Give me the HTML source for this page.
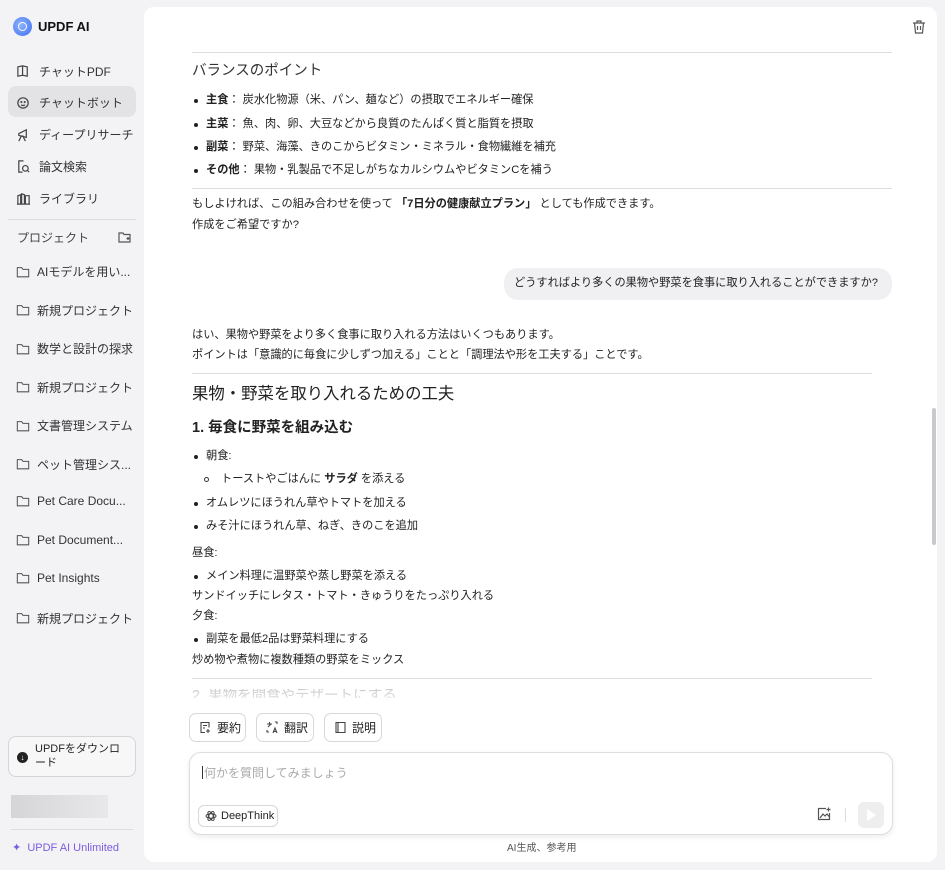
<!DOCTYPE html>
<html><head><meta charset="utf-8"><style>
*{margin:0;padding:0;box-sizing:border-box}
body{width:945px;height:870px;background:#f3f3f5;font-family:"Liberation Sans","Noto Sans CJK JP",sans-serif;color:#222;position:relative;overflow:hidden;font-size:11.2px}
.a{position:absolute;white-space:nowrap;line-height:1}
.nav{position:absolute;left:16px;font-size:12px;color:#333;display:flex;align-items:center;gap:8px;white-space:nowrap}
.nav svg{width:15px;height:15px}
.main{position:absolute;left:144px;top:7px;width:793px;height:855px;background:#fff;border-radius:10px}
.hr{position:absolute;height:1px;background:#ddd}
.dot{position:absolute;width:4px;height:4px;border-radius:50%;background:#222}
.btn{position:absolute;top:713px;height:29px;border:1px solid #d8d8d8;border-radius:7px;background:#fff;font-size:12px;display:flex;align-items:center;gap:5px;padding-left:9px;color:#222}
</style></head><body>
<div class="a" style="left:13px;top:17px;width:19px;height:19px;border-radius:50%;background:radial-gradient(circle at 40% 40%,#8fb4ff,#3b6cf0)"></div>
<div class="a" style="left:18px;top:22px;width:9px;height:9px;border-radius:50%;border:1.5px solid #fff"></div>
<div class="a" style="left:38px;top:20px;font-weight:bold;font-size:13px;color:#111">UPDF AI</div>
<div class="a" style="left:8px;top:86px;width:128px;height:31px;border-radius:8px;background:#e3e3e6"></div>
<div class="nav" style="top:63px"><svg viewBox="0 0 16 16" fill="none" stroke="#444" stroke-width="1.3"><path d="M2 3v10l5-1 5 1V3L7 2 2 3zM7 2v10"/></svg>チャットPDF</div>
<div class="nav" style="top:94px"><svg viewBox="0 0 16 16" fill="none" stroke="#444" stroke-width="1.3"><circle cx="7.5" cy="8.5" r="5.5"/><path d="M5.5 10.5q2 1.5 4 0"/><circle cx="5.7" cy="7.5" r=".5"/><circle cx="9.3" cy="7.5" r=".5"/></svg>チャットボット</div>
<div class="nav" style="top:126px"><svg viewBox="0 0 16 16" fill="none" stroke="#444" stroke-width="1.3"><path d="M3 7l8-4v8L3 9zM6 9l-3 6M7 9l3 6"/></svg>ディープリサーチ</div>
<div class="nav" style="top:158px"><svg viewBox="0 0 16 16" fill="none" stroke="#444" stroke-width="1.3"><path d="M8 2H3v12h4"/><circle cx="10" cy="10" r="3"/><path d="M12 12l2 2"/></svg>論文検索</div>
<div class="nav" style="top:190px"><svg viewBox="0 0 16 16" fill="none" stroke="#444" stroke-width="1.3"><path d="M2 14V5l3-1v10M6 14V3l3 1v10M10 14V5h4v9M1 14h14"/></svg>ライブラリ</div>
<div class="hr" style="left:8px;top:219px;width:128px;background:#ddd"></div>
<div class="a" style="left:17px;top:232px;font-size:12px;color:#444">プロジェクト</div>
<svg class="a" style="left:118px;top:231px" width="14" height="13" viewBox="0 0 14 13" fill="none" stroke="#555" stroke-width="1.2"><path d="M1 2h4l1 1.5h6V11H1z"/><path d="M10 6v3M8.5 7.5h3"/></svg>
<div id="projs"></div>
<div class="a" style="left:8px;top:736px;width:128px;height:41px;border:1px solid #d5d5d8;border-radius:8px;background:#f7f7f8"></div>
<div class="a" style="left:17px;top:752px;width:11px;height:11px;border-radius:50%;background:#222;color:#fff;font-size:8px;text-align:center;line-height:11px">↓</div>
<div class="a" style="left:35px;top:742px;font-size:11px;line-height:14px;white-space:normal;width:90px;color:#222">UPDFをダウンロ<br>ード</div>
<div class="a" style="left:11px;top:795px;width:97px;height:23px;background:linear-gradient(90deg,#d5d5d8,#e8e8ea)"></div>
<div class="hr" style="left:11px;top:829px;width:122px"></div>
<div class="a" style="left:12px;top:843px;font-size:11px;color:#7b5ce0">✦&nbsp; UPDF AI Unlimited</div>
<div class="main"></div>
<svg class="a" style="left:912px;top:19px" width="14" height="15" viewBox="0 0 14 15" fill="none" stroke="#555" stroke-width="1.2"><path d="M1 4h12M5 4V2h4v2M2.5 4l1 10h7l1-10M5.5 7v4M8.5 7v4"/></svg>
<div class="a" style="left:932px;top:408px;width:4px;height:137px;border-radius:2px;background:#c9c9cc"></div>
<div class="hr" style="left:192px;top:52px;width:700px"></div>
<div class="a" style="left:192px;top:64px;font-size:14.5px;color:#333">バランスのポイント</div>
<div class="dot" style="left:194px;top:99px"></div><div class="a" style="left:206px;top:95px"><b>主食</b>： 炭水化物源（米、パン、麺など）の摂取でエネルギー確保</div>
<div class="dot" style="left:194px;top:123px"></div><div class="a" style="left:206px;top:119px"><b>主菜</b>： 魚、肉、卵、大豆などから良質のたんぱく質と脂質を摂取</div>
<div class="dot" style="left:194px;top:146px"></div><div class="a" style="left:206px;top:142px"><b>副菜</b>： 野菜、海藻、きのこからビタミン・ミネラル・食物繊維を補充</div>
<div class="dot" style="left:194px;top:169px"></div><div class="a" style="left:206px;top:165px"><b>その他</b>： 果物・乳製品で不足しがちなカルシウムやビタミンCを補う</div>
<div class="hr" style="left:192px;top:188px;width:700px"></div>
<div class="a" style="left:192px;top:199px">もしよければ、この組み合わせを使って <b>「7日分の健康献立プラン」</b> としても作成できます。</div>
<div class="a" style="left:192px;top:220px">作成をご希望ですか?</div>
<div class="a" style="left:504px;top:268px;width:388px;height:32px;border-radius:14px;background:#f0f0f2"></div>
<div class="a" style="left:514px;top:278px;font-size:11.2px">どうすればより多くの果物や野菜を食事に取り入れることができますか?</div>
<div class="a" style="left:192px;top:330px">はい、果物や野菜をより多く食事に取り入れる方法はいくつもあります。</div>
<div class="a" style="left:192px;top:350px">ポイントは「意識的に毎食に少しずつ加える」ことと「調理法や形を工夫する」ことです。</div>
<div class="hr" style="left:192px;top:373px;width:680px"></div>
<div class="a" style="left:192px;top:386px;font-size:16.4px;color:#222">果物・野菜を取り入れるための工夫</div>
<div class="a" style="left:192px;top:421px;font-size:14.5px;font-weight:bold">1. 毎食に野菜を組み込む</div>
<div class="dot" style="left:194px;top:455px"></div><div class="a" style="left:206px;top:451px">朝食:</div>
<div class="a" style="left:204px;top:477px;width:5px;height:5px;border:1px solid #333;border-radius:50%"></div><div class="a" style="left:221px;top:474px">トーストやごはんに <b>サラダ</b> を添える</div>
<div class="dot" style="left:194px;top:502px"></div><div class="a" style="left:206px;top:498px">オムレツにほうれん草やトマトを加える</div>
<div class="dot" style="left:194px;top:525px"></div><div class="a" style="left:206px;top:521px">みそ汁にほうれん草、ねぎ、きのこを追加</div>
<div class="a" style="left:192px;top:548px">昼食:</div>
<div class="dot" style="left:194px;top:575px"></div><div class="a" style="left:206px;top:571px">メイン料理に温野菜や蒸し野菜を添える</div>
<div class="a" style="left:192px;top:591px">サンドイッチにレタス・トマト・きゅうりをたっぷり入れる</div>
<div class="a" style="left:192px;top:611px">夕食:</div>
<div class="dot" style="left:194px;top:638px"></div><div class="a" style="left:206px;top:634px">副菜を最低2品は野菜料理にする</div>
<div class="a" style="left:192px;top:655px">炒め物や煮物に複数種類の野菜をミックス</div>
<div class="hr" style="left:192px;top:678px;width:680px"></div>
<div class="a" style="left:192px;top:689px;font-size:14.5px;color:#ccc;height:9px;overflow:hidden">2. 果物を間食やデザートにする</div>
<div class="a" style="left:150px;top:690px;width:780px;height:20px;background:linear-gradient(rgba(255,255,255,0),#fff)"></div>
<div class="btn" style="left:189px;width:57px"><svg width="13" height="13" viewBox="0 0 13 13" fill="none" stroke="#444" stroke-width="1.1"><path d="M6 11.5H2V1.5h8v5M4 4.5h4M4 7h2M9 8v4M7 10h4"/></svg>要約</div>
<div class="btn" style="left:256px;width:58px"><svg width="13" height="13" viewBox="0 0 13 13" fill="none" stroke="#444" stroke-width="1.1"><path d="M1 3h5M3.5 1v2M2 6l3-3M9 1h2v2M1 9v2h2M7 12l2-5 2 5M7.8 10.5h2.4"/></svg>翻訳</div>
<div class="btn" style="left:324px;width:58px"><svg width="13" height="13" viewBox="0 0 13 13" fill="none" stroke="#444" stroke-width="1.1"><path d="M2 1.5h9v10H2zM4 1.5v10"/></svg>説明</div>
<div class="a" style="left:189px;top:752px;width:704px;height:83px;border:1px solid #ddd;border-radius:12px;background:#fff;box-shadow:0 2px 6px rgba(0,0,0,.08)"></div>
<div class="a" style="left:202px;top:766px;width:1px;height:13px;background:#333"></div>
<div class="a" style="left:204px;top:767px;font-size:12px;color:#aaa">何かを質問してみましょう</div>
<div class="a" style="left:198px;top:805px;width:80px;height:22px;border:1px solid #d8d8d8;border-radius:6px"></div>
<svg class="a" style="left:205px;top:810px" width="12" height="12" viewBox="0 0 12 12" fill="none" stroke="#444" stroke-width="1"><ellipse cx="6" cy="6" rx="5" ry="2.2"/><ellipse cx="6" cy="6" rx="5" ry="2.2" transform="rotate(60 6 6)"/><ellipse cx="6" cy="6" rx="5" ry="2.2" transform="rotate(120 6 6)"/></svg>
<div class="a" style="left:221px;top:811px;font-size:11px;color:#222">DeepThink</div>
<svg class="a" style="left:817px;top:807px" width="15" height="14" viewBox="0 0 15 14" fill="none" stroke="#555" stroke-width="1.2"><path d="M9 1.5H1.5v11h11V6M3 11l3-4 2 2 2-2 2.5 3M11.5 0.5v4M9.5 2.5h4"/></svg>
<div class="a" style="left:845px;top:808px;width:1px;height:14px;background:#ddd"></div>
<div class="a" style="left:858px;top:802px;width:26px;height:26px;border-radius:6px;background:#eee"></div>
<div class="a" style="left:867px;top:809px;width:0;height:0;border-left:9px solid #fff;border-top:6px solid transparent;border-bottom:6px solid transparent"></div>
<div class="a" style="left:507px;top:844px;font-size:10px;color:#555">AI生成、参考用</div>
<script>
var p=["AIモデルを用い...","新規プロジェクト","数学と設計の探求","新規プロジェクト","文書管理システム","ペット管理シス...","Pet Care Docu...","Pet Document...","Pet Insights","新規プロジェクト"],h="";
p.forEach(function(t,i){var y=263+i*38.5;h+='<div class="nav" style="top:'+y+'px;gap:7px"><svg viewBox="0 0 16 16" style="width:14px;height:14px" fill="none" stroke="#555" stroke-width="1.2"><path d="M1.5 3h5l1.5 2h6.5v8.5h-13z"/></svg>'+t+'</div>'});
document.getElementById("projs").innerHTML=h;
</script>
</body></html>
